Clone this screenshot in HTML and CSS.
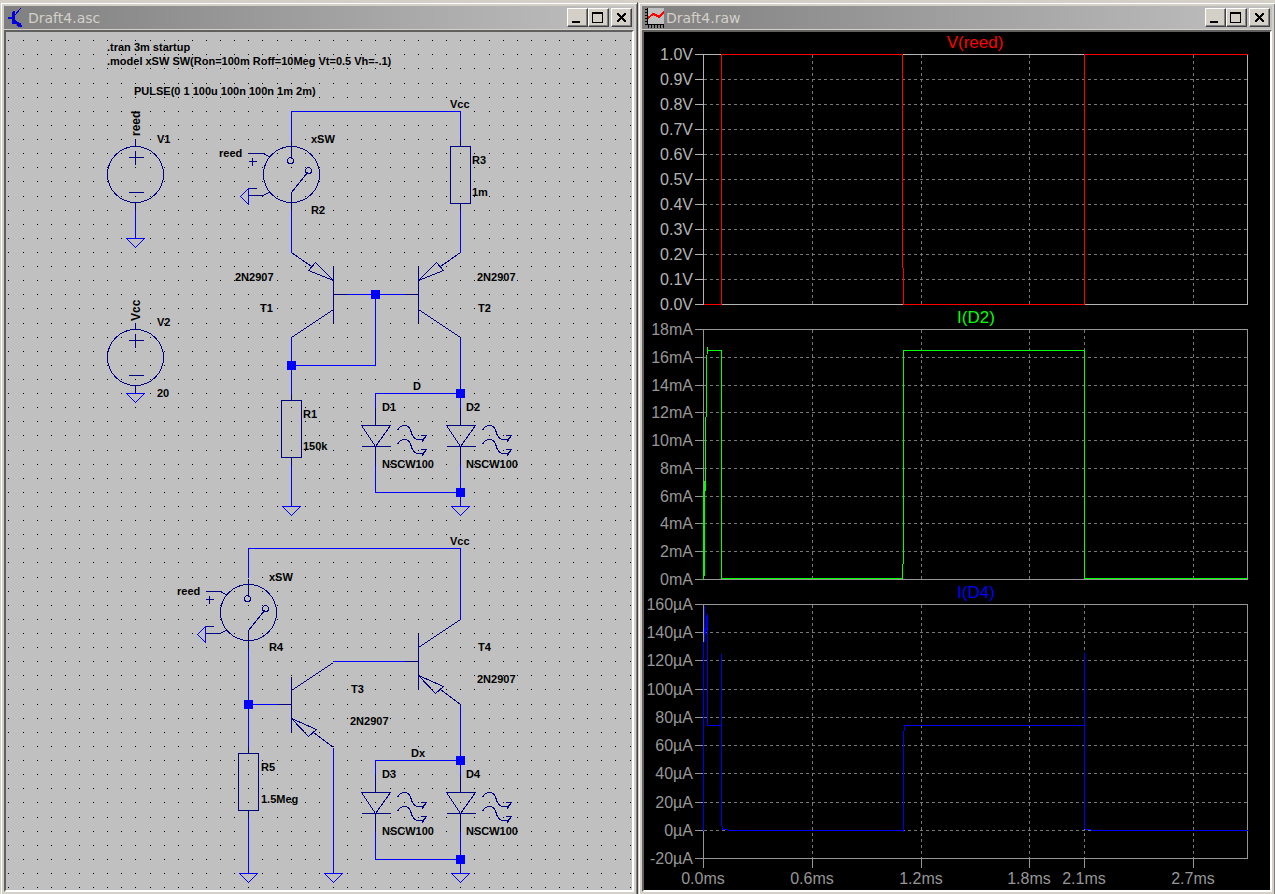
FILE: index.html
```html
<!DOCTYPE html>
<html lang="en">
<head>
<meta charset="utf-8">
<title>Draft4</title>
<link rel="stylesheet" href="styles.css">
</head>
<body>
<main class="workspace">
  <section class="window" aria-label="Draft4.asc">
    <header class="titlebar">
      <svg class="app-icon" viewBox="0 0 20 22" width="20" height="22" aria-hidden="true" shape-rendering="crispEdges">
        <path d="M2 10h4v-5h1v-1h2v13h-3v-5h-4z" fill="#0000e0"/>
        <path d="M9 8L15 1M9 13L16 20" stroke="#0000e0" stroke-width="1" fill="none"/>
        <path d="M9 14h2v1h2v1h2v2h1v2h-4v-1h-1v-2h-2z" fill="#0000e0"/>
        <path d="M10 17h1v2h-1z" fill="#806000"/>
      </svg>
      <h1 class="title">Draft4.asc</h1>
      <div class="controls">
        <button class="control" type="button" aria-label="Minimize"><svg viewBox="0 0 17 15" width="17" height="15"><path d="M3 11h8v2h-8z"/></svg></button>
        <button class="control" type="button" aria-label="Maximize"><svg viewBox="0 0 17 15" width="17" height="15"><path fill-rule="evenodd" d="M2 2h11v11h-11zM3 4v8h9v-8z"/></svg></button>
        <button class="control close" type="button" aria-label="Close"><svg viewBox="0 0 17 15" width="17" height="15"><path d="M4 3h2v1h-2zM11 3h2v1h-2zM4 4h3v1h-3zM10 4h3v1h-3zM5 5h3v1h-3zM9 5h3v1h-3zM6 6h5v1h-5zM7 7h3v1h-3zM6 8h5v1h-5zM5 9h3v1h-3zM9 9h3v1h-3zM4 10h3v1h-3zM10 10h3v1h-3zM4 11h2v1h-2zM11 11h2v1h-2z"/></svg></button>
      </div>
    </header>
    <div class="client">
      <svg class="sheet" viewBox="6 32 626 858" preserveAspectRatio="xMinYMin meet" role="img" aria-label="Schematic">
        <defs>
          <path id="row" d="M8 0h1v1h-1zM23 0h1v1h-1zM37 0h1v1h-1zM51 0h1v1h-1zM65 0h1v1h-1zM79 0h1v1h-1zM93 0h1v1h-1zM107 0h1v1h-1zM121 0h1v1h-1zM135 0h1v1h-1zM150 0h1v1h-1zM164 0h1v1h-1zM178 0h1v1h-1zM192 0h1v1h-1zM206 0h1v1h-1zM220 0h1v1h-1zM234 0h1v1h-1zM248 0h1v1h-1zM262 0h1v1h-1zM277 0h1v1h-1zM291 0h1v1h-1zM305 0h1v1h-1zM319 0h1v1h-1zM333 0h1v1h-1zM347 0h1v1h-1zM361 0h1v1h-1zM375 0h1v1h-1zM390 0h1v1h-1zM404 0h1v1h-1zM418 0h1v1h-1zM432 0h1v1h-1zM446 0h1v1h-1zM460 0h1v1h-1zM474 0h1v1h-1zM489 0h1v1h-1zM503 0h1v1h-1zM517 0h1v1h-1zM531 0h1v1h-1zM545 0h1v1h-1zM559 0h1v1h-1zM573 0h1v1h-1zM587 0h1v1h-1zM601 0h1v1h-1zM615 0h1v1h-1zM630 0h1v1h-1z"/>
          <g id="rows">
            <use href="#row" y="0"/><use href="#row" y="14"/><use href="#row" y="28"/><use href="#row" y="42"/><use href="#row" y="56"/><use href="#row" y="70"/><use href="#row" y="84"/><use href="#row" y="98"/>
          </g>
          <g id="source">
            <circle cx="135" cy="174" r="28"/>
            <path d="M135 139V146M135 150V164M128 157H143M128 192H143M135 202V210"/>
          </g>
          <g id="switch">
            <circle cx="291" cy="174" r="28"/>
            <circle cx="290" cy="160" r="3"/>
            <circle cx="308" cy="170" r="3"/>
            <path d="M291 140V158M307 172L291 192V210M248 153H263L270 157M248 161H256M252 157V165M248 188H256M248 195H263L270 191"/>
            <path class="wire" d="M248 188V204L240 196Z"/>
          </g>
          <path id="resistor" d="M-10 0H10V57H-10ZM0 -7V0M0 57V64"/>
          <path id="ground" d="M-9 0H9L0 9Z"/>
          <g id="led">
            <path d="M0 14V32M-14 32H15L0 53ZM-14 53H15M0 53V71"/>
            <path id="ray" d="M22 37C24 32 31 29 35 36C36 42 39 46 42 46H47L50 43M45 42H51L46 49"/>
            <use href="#ray" y="14"/>
          </g>
          <path id="bjt" d="M0 -28V28M-14 0H0M42 -42L0 -14M0 14L25 25L17 32ZM22 28L42 43"/>
        </defs>

        <g class="dots">
          <use href="#row" y="40"/><use href="#row" y="54"/><use href="#row" y="68"/>
          <use href="#rows" y="83"/>
          <use href="#row" y="196"/>
          <use href="#rows" y="210"/>
          <use href="#row" y="323"/><use href="#row" y="337"/><use href="#row" y="351"/><use href="#row" y="365"/><use href="#row" y="379"/><use href="#row" y="393"/><use href="#row" y="407"/><use href="#row" y="421"/><use href="#row" y="435"/>
          <use href="#rows" y="450"/>
          <use href="#row" y="562"/>
          <use href="#rows" y="577"/>
          <use href="#row" y="689"/>
          <use href="#rows" y="704"/>
          <use href="#row" y="817"/><use href="#row" y="831"/><use href="#row" y="845"/><use href="#row" y="859"/><use href="#row" y="873"/><use href="#row" y="887"/>
        </g>

        <g class="lines" transform="translate(.5 .5)">
          <g class="part">
            <use href="#source"/>
            <use href="#source" y="183"/>
            <use href="#switch"/>
            <use href="#switch" x="-43" y="438"/>
            <use href="#resistor" x="460" y="146"/>
            <use href="#resistor" x="291" y="400"/>
            <use href="#resistor" x="248" y="753"/>
            <use href="#led" x="375" y="393"/>
            <use href="#led" x="460" y="393"/>
            <use href="#led" x="375" y="760"/>
            <use href="#led" x="460" y="760"/>
            <use href="#bjt" x="418" y="661"/>
            <use href="#bjt" x="291" y="704"/>
            <path d="M333 266V322M333 294H347M291 252L311 266M333 280L315 262L308 270ZM333 309L291 337"/>
            <path d="M418 266V322M404 294H418M460 252L440 266M418 280L436 262L443 270ZM418 309L460 337"/>
          </g>
          <g class="wire">
            <path d="M291 140V111H460V139M291 210V252M460 210V252M347 294H404M375 294V365H291M291 337V393M291 464V506M460 337V407M375 407V393H460M375 464V492H460M460 464V506M135 210V238"/>
            <path d="M248 577V548H460V619M248 648V746M248 704H277M333 661H404M460 704V774M375 774V760H460M375 831V859H460M460 831V873M333 747V873M248 817V873"/>
            <use href="#ground" x="135" y="238"/>
            <use href="#ground" x="135" y="393"/>
            <use href="#ground" x="291" y="506"/>
            <use href="#ground" x="460" y="506"/>
            <use href="#ground" x="248" y="873"/>
            <use href="#ground" x="333" y="873"/>
            <use href="#ground" x="460" y="873"/>
          </g>
        </g>
        <path class="nodes" d="M371 290h9v9h-9zM287 361h9v9h-9zM456 389h9v9h-9zM456 488h9v9h-9zM244 700h9v9h-9zM456 756h9v9h-9zM456 855h9v9h-9z"/>

        <g class="notes">
          <text x="107" y="51">.tran 3m startup</text>
          <text x="107" y="65">.model xSW SW(Ron=100m Roff=10Meg Vt=0.5 Vh=-.1)</text>
          <text x="134" y="95">PULSE(0 1 100u 100n 100n 1m 2m)</text>
          <text class="upright" transform="translate(140 136) rotate(-90)">reed</text>
          <text x="157" y="143">V1</text>
          <text class="upright" transform="translate(140 321) rotate(-90)">Vcc</text>
          <text x="157" y="326">V2</text>
          <text x="157" y="397">20</text>
          <text x="311" y="143">xSW</text>
          <text x="219" y="157">reed</text>
          <text x="311" y="214">R2</text>
          <text x="450" y="108">Vcc</text>
          <text x="472" y="164">R3</text>
          <text x="472" y="196">1m</text>
          <text x="235" y="281">2N2907</text>
          <text x="260" y="312">T1</text>
          <text x="477" y="281">2N2907</text>
          <text x="478" y="312">T2</text>
          <text x="413" y="390">D</text>
          <text x="382" y="411">D1</text>
          <text x="466" y="411">D2</text>
          <text x="303" y="418">R1</text>
          <text x="303" y="450">150k</text>
          <text x="382" y="468">NSCW100</text>
          <text x="466" y="468">NSCW100</text>
          <text x="450" y="545">Vcc</text>
          <text x="269" y="581">xSW</text>
          <text x="177" y="595">reed</text>
          <text x="269" y="651">R4</text>
          <text x="478" y="651">T4</text>
          <text x="477" y="683">2N2907</text>
          <text x="351" y="693">T3</text>
          <text x="350" y="725">2N2907</text>
          <text x="261" y="771">R5</text>
          <text x="261" y="803">1.5Meg</text>
          <text x="411" y="757">Dx</text>
          <text x="382" y="778">D3</text>
          <text x="466" y="778">D4</text>
          <text x="382" y="835">NSCW100</text>
          <text x="466" y="835">NSCW100</text>
        </g>
      </svg>
    </div>
  </section>

  <section class="window" aria-label="Draft4.raw">
    <header class="titlebar">
      <svg class="app-icon" viewBox="0 0 20 22" width="20" height="22" aria-hidden="true" shape-rendering="crispEdges">
        <path d="M4 1h16v16h-16z" fill="#c0c0c0"/>
        <path d="M3 1h1v16h16v1h-17zM1 2h2v1h-2zM1 5h2v1h-2zM1 8h2v1h-2zM1 11h2v1h-2zM1 14h2v1h-2zM1 17h2v1h-2zM4 18h1v3h-1zM7 18h1v3h-1zM10 18h1v3h-1zM13 18h1v3h-1zM16 18h1v3h-1zM19 18h1v3h-1z" fill="#000"/>
        <path d="M4 11L9 7L12 8L15 10L20 5" stroke="#f00" stroke-width="2" fill="none"/>
      </svg>
      <h2 class="title">Draft4.raw</h2>
      <div class="controls">
        <button class="control" type="button" aria-label="Minimize"><svg viewBox="0 0 17 15" width="17" height="15"><path d="M3 11h8v2h-8z"/></svg></button>
        <button class="control" type="button" aria-label="Maximize"><svg viewBox="0 0 17 15" width="17" height="15"><path fill-rule="evenodd" d="M2 2h11v11h-11zM3 4v8h9v-8z"/></svg></button>
        <button class="control close" type="button" aria-label="Close"><svg viewBox="0 0 17 15" width="17" height="15"><path d="M4 3h2v1h-2zM11 3h2v1h-2zM4 4h3v1h-3zM10 4h3v1h-3zM5 5h3v1h-3zM9 5h3v1h-3zM6 6h5v1h-5zM7 7h3v1h-3zM6 8h5v1h-5zM5 9h3v1h-3zM9 9h3v1h-3zM4 10h3v1h-3zM10 10h3v1h-3zM4 11h2v1h-2zM11 11h2v1h-2z"/></svg></button>
      </div>
    </header>
    <div class="client plots">
      <svg class="sheet" viewBox="644 32 626 858" preserveAspectRatio="xMinYMin meet" role="img" aria-label="Waveforms">
        <g class="lines" transform="translate(.5 .5)">
          <g class="grid">
            <path d="M703 79H1247M703 104H1247M703 129H1247M703 154H1247M703 179H1247M703 204H1247M703 229H1247M703 254H1247M703 279H1247"/>
            <path d="M812 54V304M921 54V304M1029 54V304M1084 54V304M1193 54V304"/>
            <path d="M703 357H1247M703 385H1247M703 412H1247M703 440H1247M703 468H1247M703 496H1247M703 523H1247M703 551H1247"/>
            <path d="M812 329V579M921 329V579M1029 329V579M1084 329V579M1193 329V579"/>
            <path d="M703 632H1247M703 660H1247M703 689H1247M703 717H1247M703 745H1247M703 773H1247M703 802H1247M703 830H1247"/>
            <path d="M812 604V858M921 604V858M1029 604V858M1084 604V858M1193 604V858"/>
          </g>
          <path class="axis bright" d="M703 54H1247V304H703ZM694 54H703M694 79H703M694 104H703M694 129H703M694 154H703M694 179H703M694 204H703M694 229H703M694 254H703M694 279H703M694 304H703"/>
          <path class="axis" d="M703 329H1247V579H703ZM694 329H703M694 357H703M694 385H703M694 412H703M694 440H703M694 468H703M694 496H703M694 523H703M694 551H703M694 579H703"/>
          <path class="axis" d="M703 604H1247V858H703ZM694 604H703M694 632H703M694 660H703M694 689H703M694 717H703M694 745H703M694 773H703M694 802H703M694 830H703M694 858H703M703 858V867M812 858V867M921 858V867M1029 858V867M1084 858V867M1193 858V867"/>
          <path class="trace red" d="M703 304H721V54H902V267M903 267V304H1084V54H1247"/>
          <path class="trace green" d="M703 579V490M704 575V480M705 490V416M706 416V354M707 346V353M707 350H721V578H902V563M903 563V349M903 350H1084V578H1247"/>
          <path class="trace blue" d="M703 641V830M704 605V641M705 627V633M706 615V629M707 613V725H721M721 653V825M722 825V829H727M727 830H902M903 831V730M904 730V725H1084M1084 652V828M1085 828V829H1090M1090 830H1247"/>
        </g>
        <g class="heads">
          <text class="red" x="975" y="48">V(reed)</text>
          <text class="green" x="976" y="323">I(D2)</text>
          <text class="blue" x="976" y="598">I(D4)</text>
        </g>
        <g class="labels bright">
          <text x="693" y="60">1.0V</text><text x="693" y="85">0.9V</text><text x="693" y="110">0.8V</text><text x="693" y="135">0.7V</text><text x="693" y="160">0.6V</text><text x="693" y="185">0.5V</text><text x="693" y="210">0.4V</text><text x="693" y="235">0.3V</text><text x="693" y="260">0.2V</text><text x="693" y="285">0.1V</text><text x="693" y="310">0.0V</text>
        </g>
        <g class="labels">
          <text x="693" y="335">18mA</text><text x="693" y="363">16mA</text><text x="693" y="391">14mA</text><text x="693" y="418">12mA</text><text x="693" y="446">10mA</text><text x="693" y="474">8mA</text><text x="693" y="502">6mA</text><text x="693" y="529">4mA</text><text x="693" y="557">2mA</text><text x="693" y="585">0mA</text>
          <text x="693" y="610">160µA</text><text x="693" y="638">140µA</text><text x="693" y="666">120µA</text><text x="693" y="695">100µA</text><text x="693" y="723">80µA</text><text x="693" y="751">60µA</text><text x="693" y="779">40µA</text><text x="693" y="808">20µA</text><text x="693" y="836">0µA</text><text x="693" y="864">-20µA</text>
        </g>
        <g class="labels times">
          <text x="703" y="884">0.0ms</text><text x="812" y="884">0.6ms</text><text x="921" y="884">1.2ms</text><text x="1029" y="884">1.8ms</text><text x="1084" y="884">2.1ms</text><text x="1193" y="884">2.7ms</text>
        </g>
      </svg>
    </div>
  </section>
</main>
</body>
</html>
```
FILE: styles.css
```css
* { box-sizing: border-box; }

body {
  margin: 0;
  height: 100vh;
  overflow: hidden;
  background: #d4d0c8;
  font-family: "Liberation Sans", Arial, sans-serif;
}

/* The windows run slightly past the right and bottom of the desktop. */
.workspace {
  display: grid;
  grid-template-columns: 1fr 1fr;
  width: calc(100% + 1px);
  height: calc(100vh + 2px);
  padding-top: 2px;
}

.window {
  display: flex;
  flex-direction: column;
  min-width: 0;
  min-height: 0;
  padding: 3px;
  border: 1px solid;
  border-color: #d4d0c8 #404040 #404040 #d4d0c8;
  box-shadow: inset 1px 1px #fff, inset -1px -1px #808080;
  background: #d4d0c8;
}

.titlebar {
  display: flex;
  align-items: center;
  gap: 2px;
  height: 23px;
  margin-bottom: 1px;
  padding-right: 2px;
  background: linear-gradient(90deg, #808080, #c0c0c0);
}

.app-icon { flex: none; margin-left: 2px; }

.titlebar .title {
  flex: 1;
  margin: 0;
  font: 14px/22px "DejaVu Sans", Tahoma, sans-serif;
  color: #d4d0c8;
}

.controls { display: flex; }

.control {
  display: grid;
  place-items: center;
  width: 21px;
  height: 19px;
  padding: 0;
  border: 1px solid;
  border-color: #fff #404040 #404040 #fff;
  box-shadow: inset -1px -1px #808080;
  background: #d4d0c8;
}

.control svg { shape-rendering: crispEdges; }
.control.close { margin-left: 2px; }

.client {
  flex: 1;
  min-height: 0;
  border: 2px solid;
  border-color: #606060 #fff #fff #606060;
  background: #c0c0c0;
  overflow: hidden;
}

.plots { background: #000; }

.sheet {
  display: block;
  width: 100%;
  height: 100%;
}

.dots { fill: #000; shape-rendering: crispEdges; }
.lines { fill: none; stroke-width: 1; shape-rendering: crispEdges; }
.part { stroke: #000080; }
.wire { stroke: #0000ff; }
.nodes { fill: #0000ff; shape-rendering: crispEdges; }

.notes {
  font-size: 11px;
  font-weight: bold;
  fill: #000;
}

.notes .upright { font-size: 12px; }

.grid { stroke: #787878; stroke-dasharray: 3 3; }
.axis { stroke: #969696; }
.axis.bright { stroke: #b4b4b4; }
.trace.red { stroke: #ff0000; }
.trace.green { stroke: #00ff00; }
.trace.blue { stroke: #0000f0; }

.heads { font-size: 17px; text-anchor: middle; }
.heads .red { fill: #ff0000; }
.heads .green { fill: #00ff00; }
.heads .blue { fill: #0000ff; }

.labels { font-size: 16px; text-anchor: end; fill: #969696; }
.labels.bright { fill: #b4b4b4; }
.labels.times { text-anchor: middle; }
```
